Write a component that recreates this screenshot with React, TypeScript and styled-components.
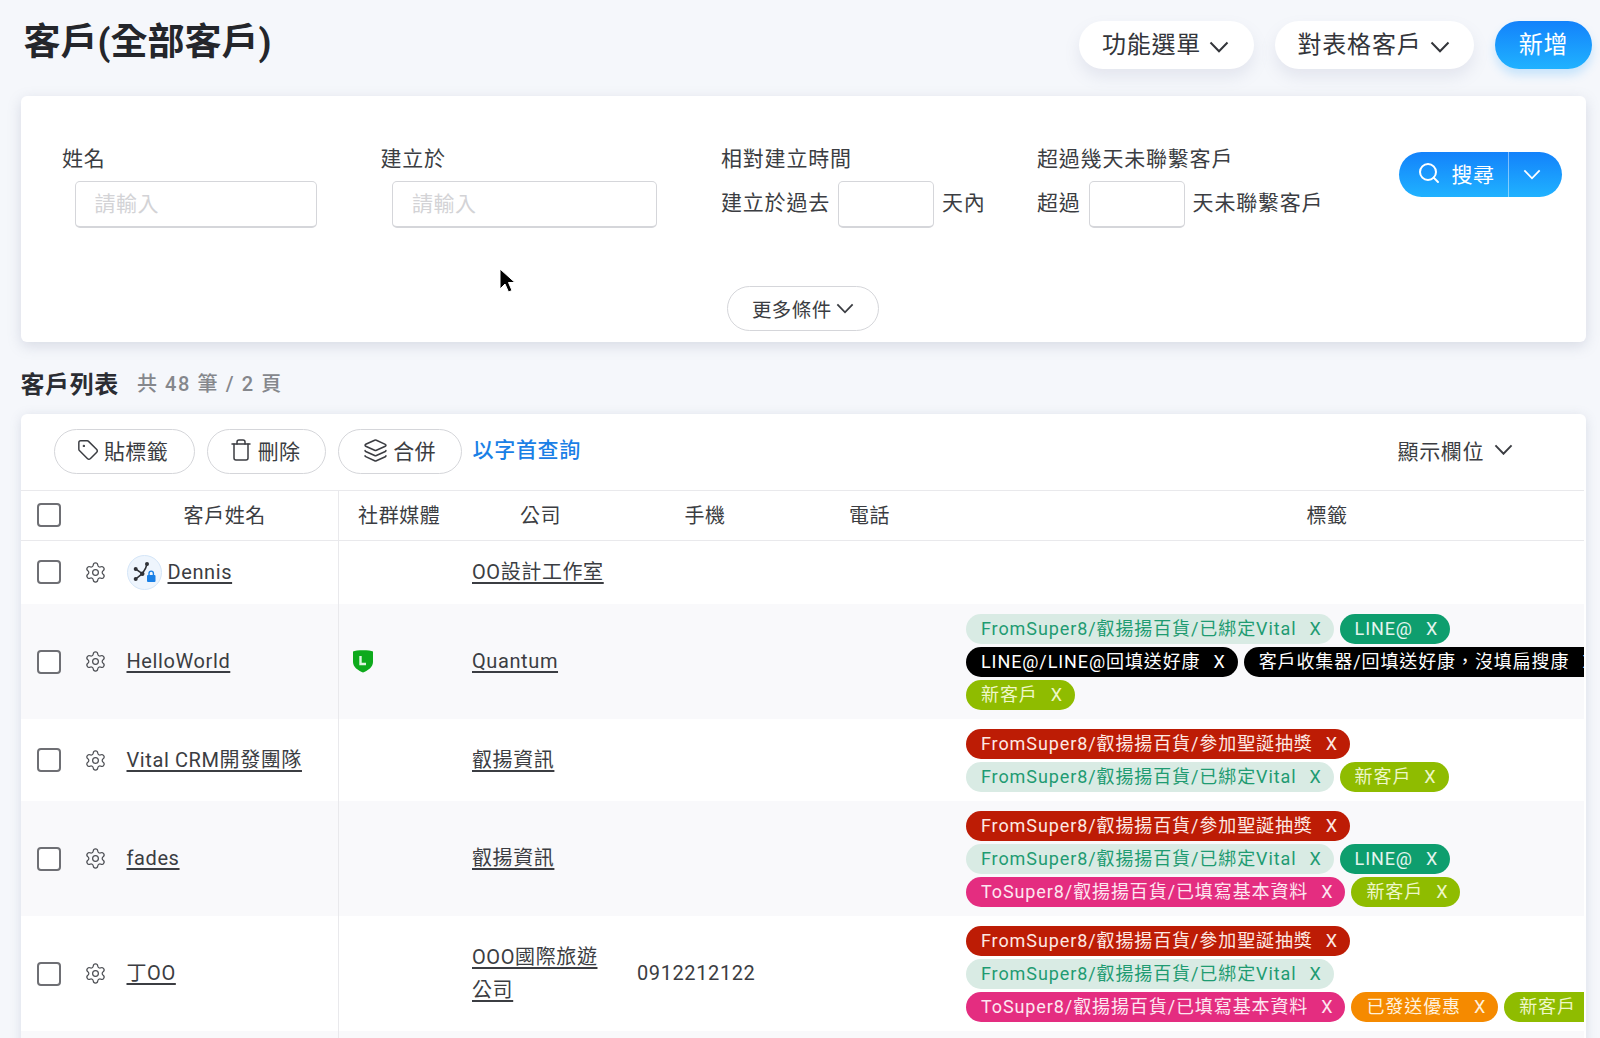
import React from 'react';
import styled, { createGlobalStyle } from 'styled-components';
import { Search, Settings, Tag as TagIcon, Trash, Layers } from 'lucide-react';

const GlobalStyle = createGlobalStyle`
	html, body {
		margin: 0;
		height: 100%;
		overflow: hidden;
		background: #f5f7fb;
	}
	body, input, button {
		font-family: Roboto, "Noto Sans CJK TC", sans-serif;
		color: #2b2d33;
	}
	* {
		box-sizing: border-box;
	}
`;

const Page = styled.div`
	width: 1600px;
	height: 1038px;
	overflow: hidden;
	position: relative;
	padding: 0 14px 0 20.5px;
`;

const TopBar = styled.header`
	height: 96px;
	display: flex;
	align-items: flex-start;
	justify-content: space-between;
	padding-top: 21px;
	margin-right: -6px;
`;

const Title = styled.h1`
	margin: -2px 0 0 3px;
	font-size: 37px;
	line-height: 48px;
	font-weight: 700;
	color: #24262b;
`;

const TopActions = styled.div`
	display: flex;
	gap: 21px;
`;

const PillButton = styled.button<{ $width: number }>`
	width: ${(p) => p.$width}px;
	height: 48px;
	border: 0;
	border-radius: 24px;
	background: #fff;
	box-shadow: 0 8px 16px rgba(120, 130, 160, 0.14);
	display: flex;
	align-items: center;
	justify-content: center;
	gap: 8px;
	font-size: 24px;
	letter-spacing: 0.8px;
	color: #33353a;
	padding: 0 2px 5px 0;

	svg {
		margin-top: 9px;
	}
`;

const PrimaryButton = styled(PillButton)`
	background: linear-gradient(180deg, #1382fb 0%, #20b2ff 100%);
	box-shadow: 0 6px 10px rgba(60, 170, 255, 0.25);
	color: #fff;
	padding: 0 0 5px;
`;

const FilterCard = styled.section`
	height: 246px;
	background: #fff;
	border-radius: 6px;
	box-shadow: 0 4px 14px rgba(110, 120, 150, 0.22);
	padding: 48px 0 0 41.5px;
	display: flex;
	flex-direction: column;
`;

const FilterGrid = styled.div`
	display: grid;
	grid-template-columns: 318.5px 340.5px 316px 362px 163px;
	height: 95px;
`;

const Field = styled.div`
	display: flex;
	flex-direction: column;
	gap: 7px;
`;

const FieldLabel = styled.label`
	font-size: 21px;
	line-height: 30px;
	letter-spacing: 0.8px;
	color: #3b3d42;
`;

const FieldRow = styled.div`
	display: flex;
	align-items: center;
	gap: 8px;
	font-size: 21px;
	letter-spacing: 0.8px;
	color: #3b3d42;
	height: 47px;
	white-space: nowrap;

	& > span {
		margin-top: -7px;
	}
`;

const TextInput = styled.input<{ $width: number; $indent?: number }>`
	width: ${(p) => p.$width}px;
	height: 47px;
	margin-left: ${(p) => p.$indent || 0}px;
	border: 1px solid #d5d6da;
	border-bottom-width: 2px;
	border-radius: 5px;
	background: #fff;
	padding: 0 19px;
	font-size: 21px;
	letter-spacing: 0.5px;
	outline: none;

	&::placeholder {
		color: #d3d3d6;
	}
`;

const SearchGroup = styled.div`
	width: 163px;
	height: 45px;
	margin-top: 8px;
	border-radius: 23px;
	background: linear-gradient(180deg, #1382fb 0%, #20b2ff 100%);
	display: flex;
	align-items: center;
	color: #fff;
`;

const SearchMain = styled.div`
	width: 110px;
	height: 100%;
	display: flex;
	align-items: center;
	justify-content: center;
	gap: 11px;
	font-size: 21px;
	letter-spacing: 0.5px;
	border-right: 1px solid rgba(255, 255, 255, 0.45);
	padding: 0 0 3px 4px;
`;

const SearchCaret = styled.div`
	flex: 1;
	display: flex;
	justify-content: center;
	padding-right: 7px;
`;

const MoreRow = styled.div`
	display: flex;
	justify-content: center;
	margin: 47px 0 0 -41.5px;
`;

const OutlineButton = styled.button<{ $width: number }>`
	width: ${(p) => p.$width}px;
	height: 45px;
	border: 1px solid #d5d6da;
	border-radius: 23px;
	background: #fff;
	display: flex;
	align-items: center;
	justify-content: center;
	gap: 4px;
	font-size: 19.5px;
	letter-spacing: 0.4px;
	color: #3b3d42;
	padding: 0 1px 0 0;
`;

const ToolButton = styled(OutlineButton)<{ $trim?: number }>`
	gap: 5px;
	font-size: 21px;
	letter-spacing: 0.3px;
	padding: 0 ${(p) => p.$trim || 0}px 2px 0;
`;

const ListHeading = styled.div`
	height: 72px;
	padding-top: 25px;
	display: flex;
	align-items: center;
	gap: 18px;
	padding-bottom: 16px;
`;

const ListTitle = styled.h2`
	margin: 0;
	font-size: 24px;
	font-weight: 700;
	letter-spacing: 0.6px;
	color: #2b2d33;
`;

const ListCount = styled.span`
	font-size: 20px;
	font-weight: 500;
	letter-spacing: 1.6px;
	color: #85878c;
`;

const TableCard = styled.section`
	background: #fff;
	border-radius: 6px 6px 0 0;
	box-shadow: 0 2px 12px rgba(110, 120, 150, 0.2);
	height: 640px;
	padding-right: 2px;
`;

const Toolbar = styled.div`
	height: 77px;
	display: flex;
	align-items: center;
	padding: 0 71px 2px 33px;
	border-bottom: 1px solid #e9e9ec;
	gap: 12px;
`;

const LetterLink = styled.a`
	font-size: 21px;
	font-weight: 500;
	letter-spacing: 0.7px;
	color: #1a80e6;
	margin: -6px 0 0 -1px;
`;

const ColumnsMenu = styled.div`
	margin-left: auto;
	display: flex;
	align-items: center;
	gap: 10px;
	font-size: 21px;
	letter-spacing: 0.6px;
	color: #3b3d42;
	margin-top: -3px;
`;

const TableClip = styled.div`
	overflow: hidden;
	height: 563px;
`;

const Table = styled.table`
	table-layout: fixed;
	width: 1684px;
	border-collapse: collapse;
`;

const HeadCell = styled.th<{ $divider?: boolean }>`
	height: 49px;
	padding: 0 0 2px 3px;
	font-size: 20px;
	font-weight: 400;
	letter-spacing: 0.6px;
	color: #3b3d42;
	border-bottom: 1px solid #e9e9ec;
	border-right: ${(p) => (p.$divider ? '1px solid #e9e9ec' : '0')};

	&:last-child {
		padding: 0 1px 2px 0;
	}
`;

const HeadName = styled.div`
	position: relative;
	text-align: center;
	padding-left: 88px;
`;

const HeadCheck = styled.div`
	position: absolute;
	left: 13.5px;
	top: 3px;
`;

const Row = styled.tr<{ $shade?: boolean; $height: number }>`
	height: ${(p) => p.$height}px;
	background: ${(p) => (p.$shade ? '#f9f9fb' : '#fff')};
`;

const Cell = styled.td<{ $divider?: boolean }>`
	padding: 0 12px 0 15.5px;
	font-size: 20px;
	line-height: 33px;
	letter-spacing: 0.6px;
	color: #3b3d42;
	vertical-align: middle;
	border-right: ${(p) => (p.$divider ? '1px solid #e9e9ec' : '0')};
`;

const SocialCell = styled(Cell)`
	padding-left: 13px;
`;

const NameCellInner = styled.div`
	display: flex;
	align-items: center;
	margin-left: 1px;
`;

const Checkbox = styled.span`
	display: block;
	flex: none;
	width: 24px;
	height: 24px;
	border: 2px solid #6e6f74;
	border-radius: 4px;
	background: #fff;
`;

const GearSlot = styled.span`
	width: 25px;
	margin: 0 19px 0 21.5px;
	display: flex;
	justify-content: center;
	color: #4d4f54;
	flex: none;
`;

const Avatar = styled.span`
	width: 35px;
	height: 35px;
	margin-right: 6px;
	border-radius: 50%;
	background: #eef5fd;
	border: 1px solid #d5e6f8;
	display: flex;
	align-items: center;
	justify-content: center;
	flex: none;
`;

const Link = styled.a`
	text-decoration: underline;
	text-underline-offset: 3px;
	color: #3b3d42;
`;

const TagWrap = styled.div`
	display: flex;
	flex-wrap: wrap;
	gap: 3px 6px;
`;

const TAG_COLORS = {
	mint: { bg: '#d9ebe4', fg: '#1f9b72' },
	teal: { bg: '#0e9e6e', fg: '#e4f5ee' },
	black: { bg: '#000', fg: '#fff' },
	lime: { bg: '#8fbc00', fg: '#eef7c8' },
	red: { bg: '#bd1c05', fg: '#fde9e4' },
	pink: { bg: '#e42d80', fg: '#fde6f0' },
	orange: { bg: '#f58a00', fg: '#fff1dc' },
};

type TagColor = keyof typeof TAG_COLORS;

const TagPill = styled.span<{ $color: TagColor }>`
	height: 30px;
	padding: 0 12px 0 15px;
	border-radius: 15px;
	display: inline-flex;
	align-items: center;
	gap: 13px;
	font-size: 18px;
	line-height: 30px;
	letter-spacing: 0.9px;
	white-space: nowrap;
	background: ${(p) => TAG_COLORS[p.$color].bg};
	color: ${(p) => TAG_COLORS[p.$color].fg};
`;

const Pointer = styled.svg`
	position: absolute;
	left: 499px;
	top: 268px;
`;

const Chevron = ({ size = 20 }: { size?: number }) => (
	<svg width={size} height={size * 0.6} viewBox="0 0 20 12" fill="none" stroke="currentColor" strokeWidth="2">
		<path d="M1.500 1.500L10 10.300L18.500 1.500" />
	</svg>
);

const NetworkIcon = () => (
	<svg width="26" height="26" viewBox="0 0 26 26" fill="none">
		<path d="M4.700 10L11.300 14.700L4.700 20M11.300 14.700L14.500 9.500L16 5" stroke="#2f3136" strokeWidth="1.6" />
		<circle cx="4.700" cy="10" r="2" fill="#2f3136" />
		<circle cx="4.700" cy="20" r="2" fill="#2f3136" />
		<circle cx="16" cy="5" r="2" fill="#2f3136" />
		<circle cx="11.300" cy="14.700" r="2.200" fill="#2f3136" />
		<rect x="16" y="16" width="8.500" height="7" rx="1" fill="#1a80e6" />
		<path d="M18 16v-1.700a2.200 2.200 0 0 1 4.400 0V16" stroke="#1a80e6" strokeWidth="1.400" />
	</svg>
);

const LineShield = () => (
	<svg width="22" height="24" viewBox="0 0 22 24" style={{ display: 'block', marginTop: -2 }}>
		<path d="M1 2.5C4 .8 18 .8 21 2.5V13c0 5-5 8.500-10 10.500C6 21.500 1 18 1 13z" fill="#0eaa1c" />
		<path d="M8.500 7v8h5.500" fill="none" stroke="#dff5e0" strokeWidth="2.400" />
	</svg>
);

const MINT = 'FromSuper8/叡揚揚百貨/已綁定Vital';
const RAFFLE = 'FromSuper8/叡揚揚百貨/參加聖誕抽獎';
const PROFILE = 'ToSuper8/叡揚揚百貨/已填寫基本資料';

type TagData = [string, TagColor];

const rows: {
	name: string;
	avatar?: boolean;
	line?: boolean;
	company: string;
	phone?: string;
	height: number;
	tags: TagData[];
}[] = [
	{ name: 'Dennis', avatar: true, company: 'OO設計工作室', height: 64, tags: [] },
	{
		name: 'HelloWorld',
		line: true,
		company: 'Quantum',
		height: 115,
		tags: [
			[MINT, 'mint'],
			['LINE@', 'teal'],
			['LINE@/LINE@回填送好康', 'black'],
			['客戶收集器/回填送好康，沒填扁搜康', 'black'],
			['新客戶', 'lime'],
		],
	},
	{
		name: 'Vital CRM開發團隊',
		company: '叡揚資訊',
		height: 82,
		tags: [
			[RAFFLE, 'red'],
			[MINT, 'mint'],
			['新客戶', 'lime'],
		],
	},
	{
		name: 'fades',
		company: '叡揚資訊',
		height: 115,
		tags: [
			[RAFFLE, 'red'],
			[MINT, 'mint'],
			['LINE@', 'teal'],
			[PROFILE, 'pink'],
			['新客戶', 'lime'],
		],
	},
	{
		name: '丁OO',
		company: 'OOO國際旅遊公司',
		phone: '0912212122',
		height: 115,
		tags: [
			[RAFFLE, 'red'],
			[MINT, 'mint'],
			[PROFILE, 'pink'],
			['已發送優惠', 'orange'],
			['新客戶', 'lime'],
		],
	},
	{ name: '', company: '', height: 40, tags: [] },
];

const App = () => {
	return (
		<Page>
			<GlobalStyle />
			<TopBar>
				<Title>客戶(全部客戶)</Title>
				<TopActions>
					<PillButton $width={175}>
						功能選單
						<Chevron />
					</PillButton>
					<PillButton $width={199}>
						對表格客戶
						<Chevron />
					</PillButton>
					<PrimaryButton $width={97}>新增</PrimaryButton>
				</TopActions>
			</TopBar>

			<FilterCard>
				<FilterGrid>
					<Field>
						<FieldLabel>姓名</FieldLabel>
						<TextInput $width={242} $indent={12.5} placeholder="請輸入" />
					</Field>
					<Field>
						<FieldLabel>建立於</FieldLabel>
						<TextInput $width={265} $indent={11.5} placeholder="請輸入" />
					</Field>
					<Field>
						<FieldLabel>相對建立時間</FieldLabel>
						<FieldRow>
							<span>建立於過去</span>
							<TextInput $width={96} />
							<span>天內</span>
						</FieldRow>
					</Field>
					<Field>
						<FieldLabel>超過幾天未聯繫客戶</FieldLabel>
						<FieldRow>
							<span>超過</span>
							<TextInput $width={96} />
							<span>天未聯繫客戶</span>
						</FieldRow>
					</Field>
					<SearchGroup>
						<SearchMain>
							<Search size={24} strokeWidth={2} />
							搜尋
						</SearchMain>
						<SearchCaret>
							<Chevron size={18} />
						</SearchCaret>
					</SearchGroup>
				</FilterGrid>
				<MoreRow>
					<OutlineButton $width={152}>
						更多條件
						<Chevron size={18} />
					</OutlineButton>
				</MoreRow>
			</FilterCard>

			<ListHeading>
				<ListTitle>客戶列表</ListTitle>
				<ListCount>共 48 筆 / 2 頁</ListCount>
			</ListHeading>

			<TableCard>
				<Toolbar>
					<ToolButton $width={141} $trim={3}>
						<TagIcon size={22} strokeWidth={1.6} />
						貼標籤
					</ToolButton>
					<ToolButton $width={119} $trim={3}>
						<Trash size={24} strokeWidth={1.5} />
						刪除
					</ToolButton>
					<ToolButton $width={124}>
						<Layers size={25} strokeWidth={1.5} />
						合併
					</ToolButton>
					<LetterLink>以字首查詢</LetterLink>
					<ColumnsMenu>
						顯示欄位
						<Chevron size={19} />
					</ColumnsMenu>
				</Toolbar>
				<TableClip>
					<Table>
						<colgroup>
							<col style={{ width: 318 }} />
							<col style={{ width: 118 }} />
							<col style={{ width: 165 }} />
							<col style={{ width: 164 }} />
							<col style={{ width: 165 }} />
							<col style={{ width: 754 }} />
						</colgroup>
						<thead>
							<tr>
								<HeadCell $divider>
									<HeadName>
										<HeadCheck>
											<Checkbox />
										</HeadCheck>
										客戶姓名
									</HeadName>
								</HeadCell>
								<HeadCell>社群媒體</HeadCell>
								<HeadCell>公司</HeadCell>
								<HeadCell>手機</HeadCell>
								<HeadCell>電話</HeadCell>
								<HeadCell>標籤</HeadCell>
							</tr>
						</thead>
						<tbody>
							{rows.map((row, i) => (
								<Row key={i} $shade={i % 2 === 1} $height={row.height}>
									<Cell $divider>
										{row.name && (
											<NameCellInner>
												<Checkbox />
												<GearSlot>
													<Settings size={23} strokeWidth={1.3} />
												</GearSlot>
												{row.avatar && (
													<Avatar>
														<NetworkIcon />
													</Avatar>
												)}
												<Link>{row.name}</Link>
											</NameCellInner>
										)}
									</Cell>
									<SocialCell>{row.line && <LineShield />}</SocialCell>
									<Cell>
										<Link>{row.company}</Link>
									</Cell>
									<Cell>{row.phone}</Cell>
									<Cell />
									<Cell>
										<TagWrap>
											{row.tags.map(([label, color]) => (
												<TagPill key={label} $color={color}>
													{label}
													<span>X</span>
												</TagPill>
											))}
										</TagWrap>
									</Cell>
								</Row>
							))}
						</tbody>
					</Table>
				</TableClip>
			</TableCard>

			<Pointer width="18" height="28" viewBox="0 0 18 28">
				<path d="M1 1v20l5-5 3.500 8 3.500-1.500-3.500-8H16z" fill="#000" stroke="#fff" strokeWidth="1" />
			</Pointer>
		</Page>
	);
};

export default App;
